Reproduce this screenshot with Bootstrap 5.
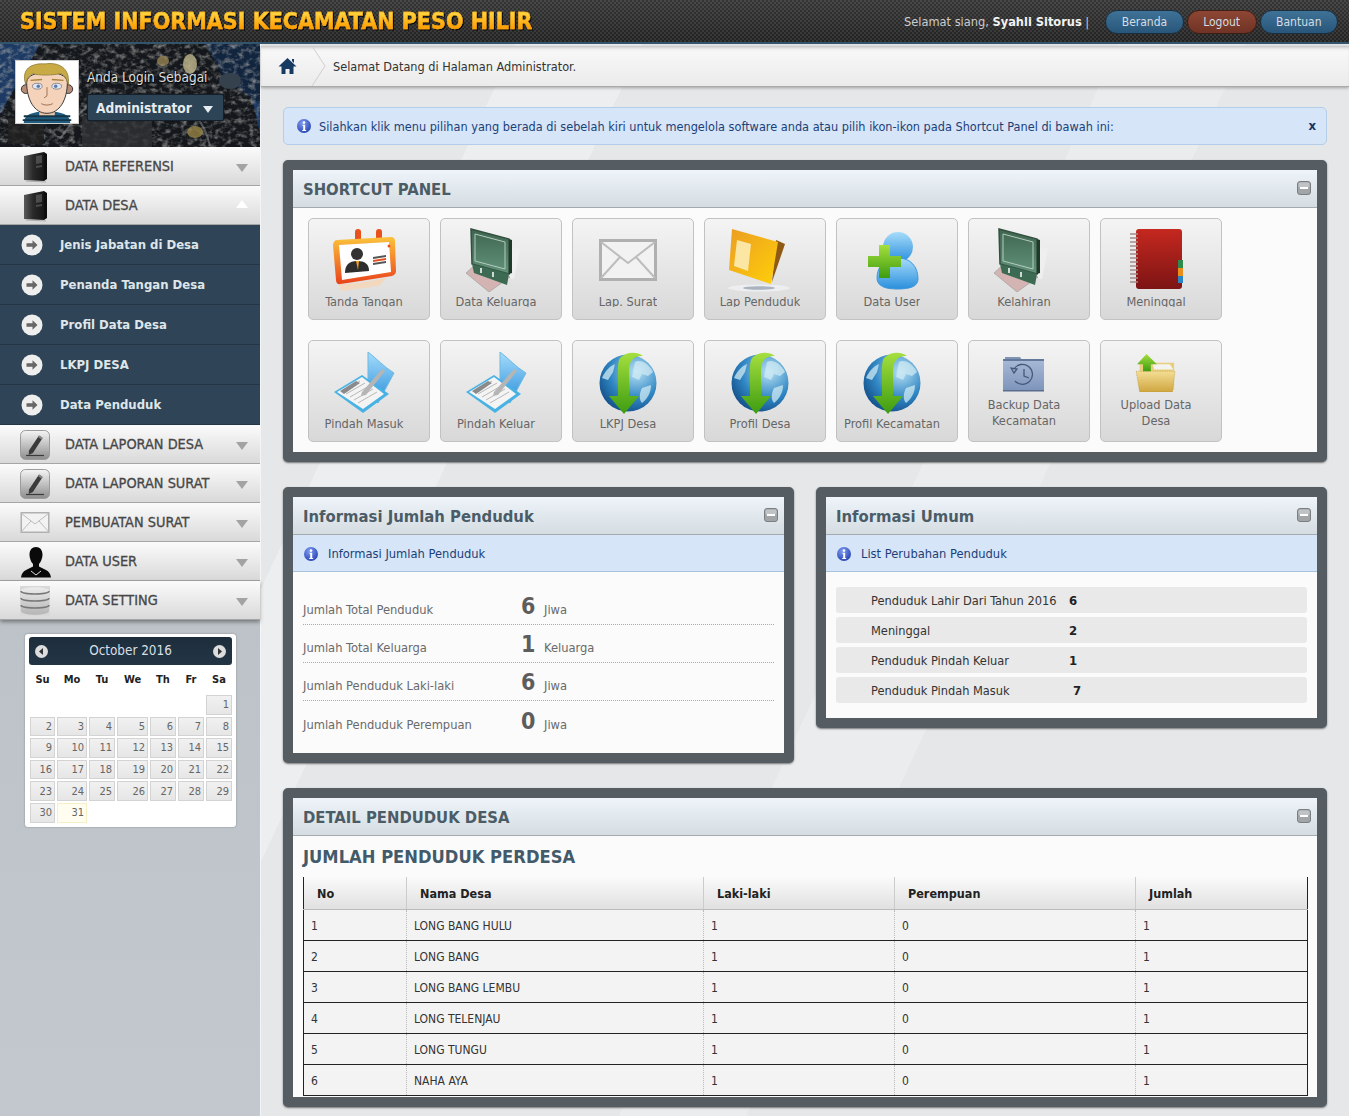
<!DOCTYPE html>
<html lang="id">
<head>
<meta charset="UTF-8">
<meta name="viewport" content="width=device-width, initial-scale=1.0">
<title>Sistem Informasi Kecamatan Peso Hilir</title>
<link href="https://cdn.jsdelivr.net/npm/bootstrap@5.3.0/dist/css/bootstrap.min.css" rel="stylesheet">
<style>
body{font-family:"DejaVu Sans Condensed","DejaVu Sans",sans-serif;font-size:12px;color:#555;background:#e5e7e9;min-height:1116px;overflow-x:hidden}
.defs-svg{display:block;width:0;height:0}

/* header */
.top-bar{height:44px;border-bottom:2px solid #34546c;background:linear-gradient(rgba(255,255,255,.07),rgba(0,0,0,.1)),conic-gradient(#262626 25%,#3b3b3b 0 50%,#262626 0 75%,#3b3b3b 0) 0 0/4px 4px;padding:2px 11px 0 20px}
.site-title{font-family:"DejaVu Sans Condensed","DejaVu Sans",sans-serif;font-weight:700;font-size:23px;line-height:30px;margin:0 0 2px;white-space:nowrap;background:linear-gradient(#ffd23c 25%,#ff9c00 75%);-webkit-background-clip:text;background-clip:text;color:transparent;-webkit-text-stroke:.4px #f9ac1c;filter:drop-shadow(1px 1px 0 rgba(0,0,0,.8))}
.greet{color:#ccc;font-size:12.7px;margin-right:13px}
.greet b{color:#f2f2f2}
.top-links{gap:3px}
.pill-btn{height:24px;padding:0 15.5px;font-size:12px;line-height:22px;color:#d5dde2;border:1px solid #1c2f3e;border-radius:12px;background:linear-gradient(#3f7297,#28567a)}
.pill-btn:hover{color:#fff;background:#28567a}
.pill-red{border-color:#3d1f17;background:linear-gradient(#8e4634,#6f3325)}
.pill-red:hover{background:#6f3325}

/* sidebar */
.side-col{width:261px;flex:0 0 261px;border-right:1px solid #f4f5f6;background:linear-gradient(#b6bdc2,#c2c8cd);min-height:1072px;padding-bottom:20px}
.profile-box{position:relative;height:103px;background:#15181c;overflow:hidden;padding:16px 0 0 15px}
.engine-bg{position:absolute;left:0;top:0}
.avatar-box{position:relative;width:64px;height:64px;background:#fff;border:1px solid #ccc;flex:0 0 64px}
.login-info{position:relative;margin-left:8px;padding-top:8px}
.login-label{color:#ddd;font-size:13.5px;line-height:18px;text-shadow:1px 1px 1px #000}
.role-btn{margin-top:8px;width:137px;height:27px;border:1px solid #14212c;background:#2d4356;color:#e6ecf0;font-weight:700;font-size:13.6px;line-height:26px;padding-left:8px;border-radius:2px;box-shadow:0 0 1px #000;white-space:nowrap}
.role-btn i{display:inline-block;border:5px solid transparent;border-top:7px solid #e6ecf0;border-bottom:0;margin-left:7px;vertical-align:0}
.menu-head{height:39px;border-bottom:1px solid #a5a5a5;background:linear-gradient(#fbfbfb,#d9d9d9);display:flex;align-items:center;font-size:14.4px;color:#474747;-webkit-text-stroke:.3px #474747;text-decoration:none;padding:1px 12px 0 0}
.menu-head:hover{color:#222}
.menu-ico{width:65px;flex:0 0 65px;padding-left:20px;display:flex}
.menu-arrow{margin-left:auto;border:6px solid transparent;border-top:8px solid #a3a3a3;border-bottom:0;margin-top:3px}
.menu-arrow.up{border-top:0;border-bottom:8px solid #fff;margin-top:-4px}
.sub-link{height:40px;display:flex;align-items:center;background:#2f4557;border-bottom:1px solid #243646;color:#dfe6ea;font-weight:700;font-size:13px;text-decoration:none;padding:1px 0 0 21px}
.sub-link:hover{color:#fff}
.sub-link svg{margin-right:17px}
.side-shadow{box-shadow:0 2px 4px rgba(0,0,0,.4)}

/* calendar */
.cal-box{width:211px;margin:14px 0 0 25px;background:#fff;border-radius:3px;padding:3px 4px 2px;box-shadow:0 0 2px rgba(0,0,0,.35)}
.cal-head{height:28px;background:linear-gradient(#1d2d3c,#233545);border-radius:3px;color:#d8dfe4;font-size:13.4px;padding:0 6px}
.cal-table{border-collapse:separate;border-spacing:2px;width:206px;table-layout:fixed;margin-left:-1px}
.cal-table th{color:#222;font-size:11px;text-align:center;height:26px;padding:0}
.cal-table td{height:19.6px;padding:0 2px;font-size:11px;line-height:17px;text-align:right;color:#666;border:1px solid #d3d3d3;background:linear-gradient(#f1f1f1,#e6e6e6)}
.cal-table td.blank{border:0;background:none}
.cal-table td.today{background:#fffdf0;border-color:#f7efc4}

/* main */
.main-col{min-width:0;flex:1 1 auto;background:linear-gradient(115deg,transparent 0 16%,rgba(255,255,255,.3) 16% 24%,transparent 24% 54%,rgba(255,255,255,.22) 54% 62%,transparent 62%)}
.crumb-bar{height:41px;margin-top:2px;background:linear-gradient(#f9f9f9,#ebebeb);border-bottom:1px solid #aaa;box-shadow:0 1px 3px rgba(0,0,0,.3),inset 0 4px 4px -3px rgba(0,0,0,.3);color:#333;font-size:12.6px}
.crumb-home{width:50px;height:40px;flex:0 0 50px;padding-left:17px}
.crumb-text{margin-left:6px;padding-top:2px}
.content-wrap{padding:20px 22px 10px}
.note-box{height:38px;margin:0 0 15px;padding:0 10px 0 12px;background:#d6e5f8;border:1px solid #b4cde8;border-radius:5px;color:#1c3f78;font-size:12.6px}
.note-box svg{margin-right:7px}
.note-text{padding-top:2px}
.note-x{margin-left:auto;color:#17325e;font-weight:700;font-size:13px;text-decoration:none}
.dark-panel{border:10px solid #565d62;border-radius:5px;background:#fbfbfb;box-shadow:0 1px 2px rgba(0,0,0,.5)}
.panel-head{height:38px;border-bottom:1px solid #a4abae;background:linear-gradient(#eef4f9,#d5dde2);padding:0 6px 0 10px;color:#4b5c67}
.panel-head h2{font-size:16.5px;font-weight:700;margin:0;padding-top:2px;color:inherit}
.panel-head svg{margin-top:-2px}
.tile-grid{display:grid;grid-template-columns:repeat(7,122px);gap:20px 10px;padding:10px 15px}
.tile{height:102px;background:linear-gradient(#f4f4f4,#d8d8d8);border:1px solid #c2c2c2;border-radius:5px;text-align:center;text-decoration:none;color:#666;font-size:12.7px;display:flex;flex-direction:column;align-items:center;padding:9px 10px 0 0;line-height:16px}
.tile:hover{color:#333}
.tile-lbl{margin-top:2px;height:13px;overflow:hidden;white-space:nowrap}
.tile-lbl.full{height:auto;overflow:visible}
.tile-small{padding-top:13px}
.tile-small .tile-lbl{height:32px;margin-top:5px;overflow:visible;width:90px;white-space:normal}
.info-row{gap:22px;margin:25px 0}
.info-col{flex:1 1 0;min-width:0}
.note-strip{height:37px;background:#d6e5f8;border-bottom:1px solid #a9c3dd;color:#1c3f78;padding:1px 0 0 10px;font-size:12.8px}
.note-strip svg{margin-right:9px}
.stat-list{padding:15px 10px 14px}
.stat-row{height:38px;border-bottom:1px dotted #aaa;color:#6a6a6a;font-size:12.8px;padding-bottom:5px}
.stat-row:last-child{border-bottom:0}
.stat-name{width:218px;flex:0 0 218px}
.stat-num{font-size:23px;font-weight:700;color:#5d5d5d;line-height:24px;margin-right:9px;width:14px;position:relative;top:-1px}
.change-list{padding:15px 10px;display:flex;flex-direction:column;gap:4px}
.change-row{height:26px;background:#e9e9e9;border-radius:3px;padding:1px 0 0 35px;color:#333;font-size:12.7px}
.change-name{width:198px;flex:0 0 198px;white-space:nowrap}
.change-row b{color:#222;font-size:13px}
.detail-title{font-size:18.2px;font-weight:700;color:#435a6a;margin:0;padding:10px 10px 9px;line-height:22px}
.desa-wrap{padding:0 10px 1px}
.desa-table{width:1004px;table-layout:fixed;margin:0;border-left:1px solid #222;border-right:1px solid #222;font-size:12px;color:#333;--bs-table-bg:transparent}
.desa-table thead th{height:32px;padding:3px 0 0 13px;vertical-align:middle;background:linear-gradient(#fafafa,#e0e0e0);border:0;border-left:1px solid #ccc;border-bottom:1px solid #bbb;color:#222;font-size:12.5px}
.desa-table thead th:first-child{border-left:0}
.desa-table tbody td{height:31px;padding:2px 0 0 7px;vertical-align:middle;background:#f3f3f3;border:0;border-left:1px dotted #bbb;border-bottom:1px solid #222;color:#333}
.desa-table tbody td:first-child{border-left:0}
</style>
</head>
<body>

<!-- shared icons -->
<svg class="defs-svg" xmlns="http://www.w3.org/2000/svg">
  <defs>
    <linearGradient id="gBlue" x1="0" y1="0" x2="0" y2="1"><stop offset="0" stop-color="#a6dcfb"/><stop offset="1" stop-color="#2b8fdc"/></linearGradient>
    <linearGradient id="gGreen" x1="0" y1="0" x2="0" y2="1"><stop offset="0" stop-color="#a5df3e"/><stop offset="1" stop-color="#3d9c10"/></linearGradient>
    <linearGradient id="gOrange" x1="0" y1="0" x2="0" y2="1"><stop offset="0" stop-color="#fbc33c"/><stop offset="1" stop-color="#e9411a"/></linearGradient>
    <linearGradient id="gFolder" x1="0" y1="0" x2="1" y2="1"><stop offset="0" stop-color="#eb9d24"/><stop offset="1" stop-color="#ffd008"/></linearGradient>
    <linearGradient id="gBoard" x1="0" y1="0" x2="0" y2="1"><stop offset="0" stop-color="#3f6550"/><stop offset="1" stop-color="#62937b"/></linearGradient>
    <linearGradient id="gRed" x1="0" y1="0" x2="0" y2="1"><stop offset="0" stop-color="#c5281f"/><stop offset="1" stop-color="#7c1414"/></linearGradient>
    <linearGradient id="gTan" x1="0" y1="0" x2="0" y2="1"><stop offset="0" stop-color="#f4dd95"/><stop offset="1" stop-color="#cfa63f"/></linearGradient>
    <linearGradient id="gSlate" x1="0" y1="0" x2="0" y2="1"><stop offset="0" stop-color="#a8bad6"/><stop offset="1" stop-color="#7e95bb"/></linearGradient>
    <linearGradient id="gTower" x1="0" y1="0" x2="1" y2="0"><stop offset="0" stop-color="#5b5b5b"/><stop offset=".45" stop-color="#2a2a2a"/><stop offset="1" stop-color="#151515"/></linearGradient>
    <linearGradient id="gKey" x1="0" y1="0" x2="0" y2="1"><stop offset="0" stop-color="#f5f5f5"/><stop offset="1" stop-color="#8d8d8d"/></linearGradient>
    <linearGradient id="gDb" x1="0" y1="0" x2="0" y2="1"><stop offset="0" stop-color="#ececec"/><stop offset="1" stop-color="#b5b5b5"/></linearGradient>
    <radialGradient id="gGlobe" cx=".65" cy=".3" r=".85"><stop offset="0" stop-color="#b9e2f5"/><stop offset=".55" stop-color="#2f86c3"/><stop offset="1" stop-color="#0b3f78"/></radialGradient>
    <radialGradient id="gInfo" cx=".4" cy=".3" r=".8"><stop offset="0" stop-color="#7f9cf0"/><stop offset="1" stop-color="#1f3cae"/></radialGradient>
  </defs>
  <symbol id="i-info" viewBox="0 0 16 16"><circle cx="8" cy="8" r="7" fill="url(#gInfo)"/><circle cx="8" cy="4.600" r="1.300" fill="#fff"/><path d="M6.400 6.800h2.800v5.100h1v1H6.200v-1h1V7.800H6.400z" fill="#fff"/></symbol>
  <symbol id="i-minus" viewBox="0 0 14 14"><rect x=".5" y=".5" width="13" height="13" rx="2.500" fill="#a1a5a8" stroke="#7b7f82"/><rect x="1.500" y="1.500" width="11" height="5" rx="1.500" fill="#c0c3c5"/><rect x="3" y="6" width="8" height="2" fill="#fff"/></symbol>
  <symbol id="i-go" viewBox="0 0 22 22"><circle cx="11" cy="11" r="10.500" fill="#eee"/><path d="M5.500 9.200h6V6.300L16.500 11l-5 4.700v-2.900h-6z" fill="#666"/></symbol>
  <symbol id="i-tower" viewBox="0 0 30 32"><path d="M4 5 24 1v29l-20-1z" fill="url(#gTower)"/><path d="M24 1l3 2v25l-3 2z" fill="#0d0d0d"/><path d="M16 5l6-1v8l-6 1zM16 15l6-1v2l-6 1z" fill="#6f6f6f" opacity=".55"/><path d="M6 30l20 1" stroke="#777" opacity=".5"/></symbol>
  <symbol id="i-pen" viewBox="0 0 30 30"><rect x=".5" y=".5" width="29" height="29" rx="5" fill="url(#gKey)" stroke="#9c9c9c"/><path d="M9 20.500 19 5.500l3.600 2.400-9.700 15-4.200 2z" fill="#3b3b3b"/><path d="M18 7l3.600 2.400 1-1.600-3.500-2.400z" fill="#888"/><path d="M6 25.500h18" stroke="#3b3b3b" stroke-width="1.200"/></symbol>
  <symbol id="i-mail" viewBox="0 0 58 42"><rect x="1.500" y="1.500" width="55" height="39" fill="#f2f2f2" stroke="#b0b0b0" stroke-width="3"/><path d="M2 3 29 24 56 3M2 39l19-21M56 39 37 18" fill="none" stroke="#bdbdbd" stroke-width="2"/></symbol>
  <symbol id="i-person" viewBox="0 0 32 32"><path d="M16 1c4 0 6.500 3 6.500 7.500 0 4-2 8-3.500 9.500v2.500l7 3.500c3 1.500 4.500 4 5 7.500H1c.500-3.500 2-6 5-7.500l7-3.500V18c-1.500-1.500-3.500-5.500-3.500-9.500C9.500 4 12 1 16 1z" fill="#0a0a0a"/><path d="M11 25l5 4 5-4" fill="none" stroke="#ddd" stroke-width="1"/></symbol>
  <symbol id="i-db" viewBox="0 0 30 30"><rect width="30" height="30" fill="#d8d8d8"/><path d="M1 5c0-5 28-5 28 0v20c0 5-28 5-28 0z" fill="url(#gDb)"/><path d="M1 5c0 4 28 4 28 0M1 12c0 4 28 4 28 0M1 19c0 4 28 4 28 0" fill="none" stroke="#777" stroke-width="1.500"/></symbol>
  <symbol id="i-board" viewBox="0 0 64 64"><path d="M36 16l20 5-6 30-16-3z" fill="#f0f0f0" opacity=".85"/><path d="M2 45 25 64l21-15-11-6-23-7z" fill="#d4b3b3" stroke="#999" stroke-width=".6"/><path d="M7 1 45 11v35L8 36z" fill="url(#gBoard)" stroke="#33503f" stroke-width="1.500"/><path d="M11 6 41 14v27L11 33z" fill="none" stroke="#b6cabd"/><path d="M8 36 45 46l-2 11-33-12z" fill="#3c6a52"/><path d="M45 11l3 1v33l-3 1z" fill="#1f3a2a"/><path d="M17 40v5M29 44v5" stroke="#fff" stroke-width="1.500"/></symbol>
  <symbol id="i-globe" viewBox="0 0 60 64"><circle cx="30" cy="33" r="28.500" fill="url(#gGlobe)"/><path d="M37 12c6-3 14 2 18 10l-5 4-6-2-3 6-7-3zM44 38l9-3c0 8-4 14-9 18-3-3-3-9 0-15zM4 28c3-7 8-12 13-14l-2 8-5 8z" fill="#cfe9f3" opacity=".75"/><path d="M22 8C28 2 38 1 45 6c-9-1-14 5-14 14v26h10L26 64 11 46h9V21c0-5 0-10 2-13z" fill="url(#gGreen)"/></symbol>
  <symbol id="i-book" viewBox="0 0 64 64"><path d="M36 2c8 6 16 15 26 21L46 53 36 45z" fill="url(#gBlue)" stroke="#6fb9e2"/><path d="M2 42 30 25l27 19-26 19z" fill="#49b2e4"/><path d="M5 42 30 27l22 17-21 15z" fill="#f4f4f4"/><path d="M10 41 28 31M14 44 33 33M18 47 37 36M22 50 41 39M26 53 45 42" stroke="#b8b8b8"/><path d="M8 41 24 31l4 2-16 11z" fill="#8a8a8a"/><path d="M30 42 50 19l3 2-19 24-5 1z" fill="#b5b5b5"/></symbol>
  <symbol id="i-badge" viewBox="0 0 66 64"><rect x="24" y="1" width="6" height="14" rx="3" fill="#e8501e"/><rect x="45" y="1" width="6" height="14" rx="3" fill="#e8501e"/><path d="M6 12 60 9c3 0 4 2 4 4l1 30c0 3-2 4-4 5L10 56c-3 1-5-1-5-4L2 17c0-3 2-5 4-5z" fill="url(#gOrange)"/><path d="M8 17 58 14l2 30-49 8z" fill="#fff"/><circle cx="58" cy="18" r="1.500" fill="#e8501e"/><circle cx="26" cy="26" r="6" fill="#333"/><path d="M14 45c0-8 4-12 12-12s12 3 12 10z" fill="#2d2d2d"/><path d="M25 33h3l-1 9z" fill="#f2a020"/><path d="M42 29l13-2v2l-13 2zM42 35l13-2v2l-13 2z" fill="#555"/><path d="M42 32l13-2v2l-13 2z" fill="#e8501e"/><path d="M8 56c16 0 30-3 48-6l-8 8-38 5z" fill="#f5d6b8" opacity=".85"/></symbol>
  <symbol id="i-folder" viewBox="0 0 64 64"><ellipse cx="31" cy="60" rx="31" ry="3.500" fill="#eceef2"/><ellipse cx="31" cy="60" rx="16" ry="1.800" fill="#aab3bf"/><path d="M48 12l9 4-13 38z" fill="#8f5a14"/><path d="M4 1 50 14l-7 42L1 42z" fill="url(#gFolder)"/><path d="M9 12 23 16l-3 27-14-5z" fill="#fbe6a4"/></symbol>
  <symbol id="i-useradd" viewBox="0 0 54 60"><circle cx="33" cy="17" r="15" fill="url(#gBlue)"/><path d="M12 48c0-13 9-20 21-20s20 8 20 21c0 8-9 10-21 10-12 0-20-3-20-11z" fill="url(#gBlue)" stroke="#3b97dd"/><path d="M14 15h11v11h11v11H25v11H14V37H3V26h11z" fill="url(#gGreen)"/></symbol>
  <symbol id="i-redbook" viewBox="0 0 56 64"><rect x="8" y="1" width="46" height="60" rx="3" fill="url(#gRed)"/><path d="M50 32h5v8h-5z" fill="#2e8a4c"/><path d="M50 40h5v8h-5z" fill="#ea8e1e"/><path d="M50 48h5v7h-5z" fill="#2c85c3"/><path d="M2 6h8M2 10h8M2 14h8M2 18h8M2 22h8M2 26h8M2 30h8M2 34h8M2 38h8M2 42h8M2 46h8M2 50h8M2 54h8" stroke="#a08a8a" stroke-width="1.500"/></symbol>
  <symbol id="i-clockfolder" viewBox="0 0 44 38"><path d="M3 3h15l2 3H3z" fill="#7f93b3"/><path d="M1 5h41v31H1z" fill="url(#gSlate)"/><path d="M1 5h41v2H1z" fill="#64789b"/><path d="M1 36h41v1.500H1z" fill="#5b6d8c"/><path d="M12 15a10 10 0 1 1 1 12" fill="none" stroke="#46587a" stroke-width="1.300"/><path d="M9 14l3 5 3-4zM22 15v7l5 2" fill="none" stroke="#46587a" stroke-width="1.300"/></symbol>
  <symbol id="i-upfolder" viewBox="0 0 48 44"><path d="M5 10h40v32H5z" fill="#e8cf7c"/><path d="M22 18h22l-4-6H20z" fill="#f3f3f0"/><path d="M1 20h45l-3 24H5z" fill="url(#gTan)" stroke="#a88a30" stroke-dasharray="1 1" stroke-width=".6"/><path d="M13 0 25 12h-7v8H9v-8H2z" fill="url(#gGreen)"/></symbol>
  <symbol id="i-avatar" viewBox="0 0 64 64"><path d="M8 64c0-9 9-12 24-12s24 3 24 12z" fill="#1f5d80"/><path d="M8 57h48M7 61h50" stroke="#173447" stroke-width="2"/><path d="M24 48h16v8H24z" fill="#edc3a6"/><circle cx="10" cy="29" r="4.500" fill="#b88b75" stroke="#333"/><circle cx="54" cy="29" r="4.500" fill="#b88b75" stroke="#333"/><path d="M11 22c0 18 8 32 21 32s21-14 21-32C53 8 11 8 11 22z" fill="#f5d3ba" stroke="#333"/><path d="M10 24C5 8 16 2 30 3c14-2 26 4 24 21-2-6-4-10-8-11-10 2-22 2-29 0-4 2-6 6-7 11z" fill="#c9ab46" stroke="#8c772e" stroke-width=".8"/><ellipse cx="22" cy="26" rx="5" ry="3" fill="#dfe7f5" stroke="#555" stroke-width=".6"/><ellipse cx="42" cy="26" rx="5" ry="3" fill="#dfe7f5" stroke="#555" stroke-width=".6"/><circle cx="23" cy="26" r="1.800" fill="#5b7ab0"/><circle cx="41" cy="26" r="1.800" fill="#5b7ab0"/><path d="M15 20l12-1M37 19l12 1" stroke="#a6823a" stroke-width="1.500"/><path d="M32 27v9l-3 2M26 44c3 2 9 2 12 0" fill="none" stroke="#9c6e58"/></symbol>
</svg>

<!-- top bar -->
<header class="top-bar d-flex align-items-center justify-content-between">
  <h1 class="site-title">SISTEM INFORMASI KECAMATAN PESO HILIR</h1>
  <div class="d-flex align-items-center top-links">
    <span class="greet">Selamat siang, <b>Syahli Sitorus</b> |</span>
    <a class="btn pill-btn" href="#">Beranda</a>
    <a class="btn pill-btn pill-red" href="#">Logout</a>
    <a class="btn pill-btn" href="#">Bantuan</a>
  </div>
</header>

<div class="d-flex">
  <!-- sidebar -->
  <aside class="side-col">
    <div class="profile-box d-flex">
      <svg class="engine-bg" width="260" height="103" viewBox="0 0 260 103" xmlns="http://www.w3.org/2000/svg">
        <defs><filter id="engineNoise" x="0" y="0" width="100%" height="100%"><feTurbulence type="fractalNoise" baseFrequency=".16 .2" numOctaves="3" seed="11"/><feColorMatrix values="0 0 0 0 .38  0 0 0 0 .38  0 0 0 0 .37  1.700 0 0 0 -.75"/></filter></defs>
        <rect width="260" height="103" fill="#14171b"/>
        <path d="M0 0h40L0 70zM240 0h20v90z" fill="#1c3a63"/>
        <path d="M205 0h55v60l-35-25z" fill="#12253f"/>
        <rect width="260" height="103" filter="url(#engineNoise)"/>
        <rect x="82" y="72" width="70" height="31" fill="#2f3234" opacity=".8"/>
        <rect x="8" y="74" width="36" height="26" fill="#222" opacity=".8"/>
        <ellipse cx="190" cy="20" rx="7" ry="10" fill="#c2b98d" opacity=".8"/>
        <ellipse cx="163" cy="17" rx="6" ry="5" fill="#a8935a" opacity=".7"/>
        <ellipse cx="230" cy="37" rx="11" ry="8" fill="#36414e"/>
        <ellipse cx="195" cy="88" rx="8" ry="6" fill="#a8914a" opacity=".7"/>
        <path d="M60 95c20-30 30-35 45-45M175 60c20 5 30 20 35 42" fill="none" stroke="#8b8f92" stroke-width="2" opacity=".5"/>
      </svg>
      <div class="avatar-box"><svg width="62" height="62"><use href="#i-avatar"/></svg></div>
      <div class="login-info">
        <div class="login-label">Anda Login Sebagai</div>
        <div class="role-btn">Administrator <i></i></div>
      </div>
    </div>

    <a class="menu-head" href="#"><span class="menu-ico"><svg width="30" height="32"><use href="#i-tower"/></svg></span>DATA REFERENSI<span class="menu-arrow"></span></a>
    <a class="menu-head" href="#"><span class="menu-ico"><svg width="30" height="32"><use href="#i-tower"/></svg></span>DATA DESA<span class="menu-arrow up"></span></a>
    <a class="sub-link" href="#"><svg width="22" height="22"><use href="#i-go"/></svg>Jenis Jabatan di Desa</a>
    <a class="sub-link" href="#"><svg width="22" height="22"><use href="#i-go"/></svg>Penanda Tangan Desa</a>
    <a class="sub-link" href="#"><svg width="22" height="22"><use href="#i-go"/></svg>Profil Data Desa</a>
    <a class="sub-link" href="#"><svg width="22" height="22"><use href="#i-go"/></svg>LKPJ DESA</a>
    <a class="sub-link" href="#"><svg width="22" height="22"><use href="#i-go"/></svg>Data Penduduk</a>
    <a class="menu-head" href="#"><span class="menu-ico"><svg width="30" height="30"><use href="#i-pen"/></svg></span>DATA LAPORAN DESA<span class="menu-arrow"></span></a>
    <a class="menu-head" href="#"><span class="menu-ico"><svg width="30" height="30"><use href="#i-pen"/></svg></span>DATA LAPORAN SURAT<span class="menu-arrow"></span></a>
    <a class="menu-head" href="#"><span class="menu-ico"><svg width="30" height="21"><use href="#i-mail"/></svg></span>PEMBUATAN SURAT<span class="menu-arrow"></span></a>
    <a class="menu-head" href="#"><span class="menu-ico"><svg width="32" height="32"><use href="#i-person"/></svg></span>DATA USER<span class="menu-arrow"></span></a>
    <a class="menu-head side-shadow" href="#"><span class="menu-ico"><svg width="30" height="30"><use href="#i-db"/></svg></span>DATA SETTING<span class="menu-arrow"></span></a>

    <div class="cal-box">
      <div class="cal-head d-flex align-items-center justify-content-between">
        <svg width="13" height="13" viewBox="0 0 13 13"><circle cx="6.500" cy="6.500" r="6.500" fill="#ddd"/><path d="M8 3v7L4 6.500z" fill="#333"/></svg>
        <span>October 2016</span>
        <svg width="13" height="13" viewBox="0 0 13 13"><circle cx="6.500" cy="6.500" r="6.500" fill="#ddd"/><path d="M5 3v7l4-3.500z" fill="#333"/></svg>
      </div>
      <table class="cal-table">
        <colgroup><col style="width:25px"><col style="width:30px"><col style="width:26px"><col style="width:31px"><col style="width:26px"><col style="width:26px"><col style="width:26px"></colgroup>
        <thead><tr><th>Su</th><th>Mo</th><th>Tu</th><th>We</th><th>Th</th><th>Fr</th><th>Sa</th></tr></thead>
        <tbody>
          <tr><td class="blank"></td><td class="blank"></td><td class="blank"></td><td class="blank"></td><td class="blank"></td><td class="blank"></td><td>1</td></tr>
          <tr><td>2</td><td>3</td><td>4</td><td>5</td><td>6</td><td>7</td><td>8</td></tr>
          <tr><td>9</td><td>10</td><td>11</td><td>12</td><td>13</td><td>14</td><td>15</td></tr>
          <tr><td>16</td><td>17</td><td>18</td><td>19</td><td>20</td><td>21</td><td>22</td></tr>
          <tr><td>23</td><td>24</td><td>25</td><td>26</td><td>27</td><td>28</td><td>29</td></tr>
          <tr><td>30</td><td class="today">31</td><td class="blank"></td><td class="blank"></td><td class="blank"></td><td class="blank"></td><td class="blank"></td></tr>
        </tbody>
      </table>
    </div>
  </aside>

  <!-- main content -->
  <main class="main-col">
    <div class="crumb-bar d-flex align-items-center">
      <div class="crumb-home d-flex align-items-center">
        <svg width="19" height="18" viewBox="0 0 19 18"><path d="M9.500 1 18.500 9.500h-3V17h-4v-5h-4v5h-4V9.500h-3z" fill="#173a63"/><path d="M14 2h2v4l-2-2z" fill="#173a63"/></svg>
      </div>
      <svg width="16" height="40" viewBox="0 0 16 40"><path d="M1 0 14 20 1 40" fill="none" stroke="#cfcfcf"/></svg>
      <span class="crumb-text">Selamat Datang di Halaman Administrator.</span>
    </div>

    <div class="content-wrap">
      <div class="note-box d-flex align-items-center">
        <svg width="16" height="16"><use href="#i-info"/></svg>
        <span class="note-text">Silahkan klik menu pilihan yang berada di sebelah kiri untuk mengelola software anda atau pilih ikon-ikon pada Shortcut Panel di bawah ini:</span>
        <a class="note-x" href="#">x</a>
      </div>

      <section class="dark-panel">
        <div class="panel-head d-flex align-items-center justify-content-between">
          <h2>SHORTCUT PANEL</h2>
          <svg width="14" height="14"><use href="#i-minus"/></svg>
        </div>
        <div class="tile-grid">
          <a class="tile" href="#"><svg width="66" height="64"><use href="#i-badge"/></svg><span class="tile-lbl">Tanda Tangan</span></a>
          <a class="tile" href="#"><svg width="64" height="64"><use href="#i-board"/></svg><span class="tile-lbl">Data Keluarga</span></a>
          <a class="tile" href="#"><svg width="64" height="64" viewBox="-3 -11 64 64"><use href="#i-mail" width="58" height="42"/></svg><span class="tile-lbl">Lap. Surat</span></a>
          <a class="tile" href="#"><svg width="64" height="64"><use href="#i-folder"/></svg><span class="tile-lbl">Lap Penduduk</span></a>
          <a class="tile" href="#"><svg width="54" height="64" viewBox="0 -2 54 64"><use href="#i-useradd" width="54" height="60"/></svg><span class="tile-lbl">Data User</span></a>
          <a class="tile" href="#"><svg width="64" height="64"><use href="#i-board"/></svg><span class="tile-lbl">Kelahiran</span></a>
          <a class="tile" href="#"><svg width="56" height="64"><use href="#i-redbook"/></svg><span class="tile-lbl">Meninggal</span></a>

          <a class="tile" href="#"><svg width="64" height="64"><use href="#i-book"/></svg><span class="tile-lbl full">Pindah Masuk</span></a>
          <a class="tile" href="#"><svg width="64" height="64"><use href="#i-book"/></svg><span class="tile-lbl full">Pindah Keluar</span></a>
          <a class="tile" href="#"><svg width="60" height="64"><use href="#i-globe"/></svg><span class="tile-lbl full">LKPJ Desa</span></a>
          <a class="tile" href="#"><svg width="60" height="64"><use href="#i-globe"/></svg><span class="tile-lbl full">Profil Desa</span></a>
          <a class="tile" href="#"><svg width="60" height="64"><use href="#i-globe"/></svg><span class="tile-lbl full">Profil Kecamatan</span></a>
          <a class="tile tile-small" href="#"><svg width="44" height="38"><use href="#i-clockfolder"/></svg><span class="tile-lbl">Backup Data Kecamatan</span></a>
          <a class="tile tile-small" href="#"><svg width="48" height="38" viewBox="0 0 48 44" preserveAspectRatio="xMidYMid meet"><use href="#i-upfolder"/></svg><span class="tile-lbl">Upload Data Desa</span></a>
        </div>
      </section>

      <div class="d-flex align-items-start info-row">
        <section class="dark-panel info-col">
          <div class="panel-head d-flex align-items-center justify-content-between">
            <h2>Informasi Jumlah Penduduk</h2>
            <svg width="14" height="14"><use href="#i-minus"/></svg>
          </div>
          <div class="note-strip d-flex align-items-center"><svg width="16" height="16"><use href="#i-info"/></svg>Informasi Jumlah Penduduk</div>
          <div class="stat-list">
            <div class="stat-row d-flex align-items-end"><span class="stat-name">Jumlah Total Penduduk</span><span class="stat-num">6</span><span>Jiwa</span></div>
            <div class="stat-row d-flex align-items-end"><span class="stat-name">Jumlah Total Keluarga</span><span class="stat-num">1</span><span>Keluarga</span></div>
            <div class="stat-row d-flex align-items-end"><span class="stat-name">Jumlah Penduduk Laki-laki</span><span class="stat-num">6</span><span>Jiwa</span></div>
            <div class="stat-row d-flex align-items-end"><span class="stat-name">Jumlah Penduduk Perempuan</span><span class="stat-num">0</span><span>Jiwa</span></div>
          </div>
        </section>
        <section class="dark-panel info-col">
          <div class="panel-head d-flex align-items-center justify-content-between">
            <h2>Informasi Umum</h2>
            <svg width="14" height="14"><use href="#i-minus"/></svg>
          </div>
          <div class="note-strip d-flex align-items-center"><svg width="16" height="16"><use href="#i-info"/></svg>List Perubahan Penduduk</div>
          <div class="change-list">
            <div class="change-row d-flex align-items-center"><span class="change-name">Penduduk Lahir Dari Tahun 2016</span><b>6</b></div>
            <div class="change-row d-flex align-items-center"><span class="change-name">Meninggal</span><b>2</b></div>
            <div class="change-row d-flex align-items-center"><span class="change-name">Penduduk Pindah Keluar</span><b>1</b></div>
            <div class="change-row d-flex align-items-center"><span class="change-name">Penduduk Pindah Masuk</span><b class="ps-1">7</b></div>
          </div>
        </section>
      </div>

      <section class="dark-panel">
        <div class="panel-head d-flex align-items-center justify-content-between">
          <h2>DETAIL PENDUDUK DESA</h2>
          <svg width="14" height="14"><use href="#i-minus"/></svg>
        </div>
        <h3 class="detail-title">JUMLAH PENDUDUK PERDESA</h3>
        <div class="desa-wrap">
          <table class="table desa-table">
            <colgroup><col style="width:103px"><col style="width:297px"><col style="width:191px"><col style="width:241px"><col style="width:172px"></colgroup>
            <thead><tr><th>No</th><th>Nama Desa</th><th>Laki-laki</th><th>Perempuan</th><th>Jumlah</th></tr></thead>
            <tbody>
              <tr><td>1</td><td>LONG BANG HULU</td><td>1</td><td>0</td><td>1</td></tr>
              <tr><td>2</td><td>LONG BANG</td><td>1</td><td>0</td><td>1</td></tr>
              <tr><td>3</td><td>LONG BANG LEMBU</td><td>1</td><td>0</td><td>1</td></tr>
              <tr><td>4</td><td>LONG TELENJAU</td><td>1</td><td>0</td><td>1</td></tr>
              <tr><td>5</td><td>LONG TUNGU</td><td>1</td><td>0</td><td>1</td></tr>
              <tr><td>6</td><td>NAHA AYA</td><td>1</td><td>0</td><td>1</td></tr>
            </tbody>
          </table>
        </div>
      </section>
    </div>
  </main>
</div>

<script src="https://cdn.jsdelivr.net/npm/bootstrap@5.3.0/dist/js/bootstrap.bundle.min.js"></script>
</body>
</html>
